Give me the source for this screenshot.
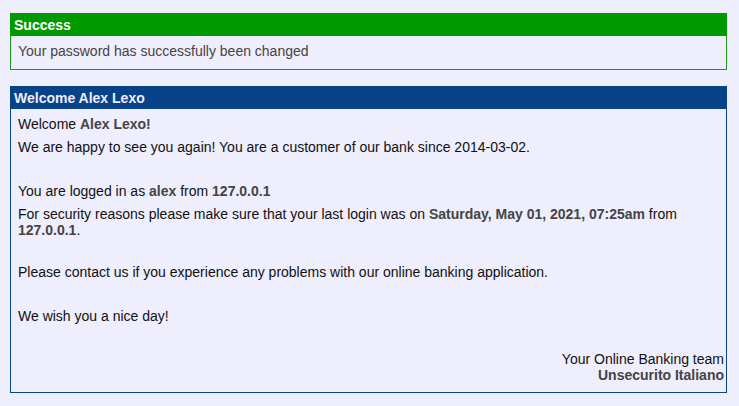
export default function App() {
  return (
    <div className="min-h-[406px] bg-[#eeeefd] pt-[13px] px-[10px] text-[14px] leading-[16px]" style={{ fontFamily: '"Liberation Sans", Arial, sans-serif' }}>
      {/* Success message */}
      <div className="w-[717px] border border-[#1a9a1a]">
        <div className="bg-[#009900] text-white font-bold px-[4px] pt-[4px] pb-[3px] -mx-px -mt-px">Success</div>
        <div className="pl-[7px] pt-[7px] pb-[10px] text-[#444]">Your password has successfully been changed</div>
      </div>

      {/* Welcome panel */}
      <div className="w-[717px] mt-[16px] border border-[#08438a]">
        <div className="bg-[#08438a] text-[#eeeefd] font-bold px-[4px] pt-[4px] pb-[3px] -mx-px -mt-px">Welcome Alex Lexo</div>
        <div className="pl-[7px] pr-[2px] pt-[7px] pb-[9px] text-[#111]">
          <p>Welcome <b className="text-[#444]">Alex Lexo!</b></p>
          <p className="mt-[7px]">We are happy to see you again! You are a customer of our bank since 2014-03-02.</p>
          <p className="mt-[28px]">You are logged in as <b className="text-[#444]">alex</b> from <b className="text-[#444]">127.0.0.1</b></p>
          <p className="mt-[7px] pr-[5px]">
            For security reasons please make sure that your last login was on{' '}
            <b className="text-[#444]">Saturday, May 01, 2021, 07:25am</b> from <b className="text-[#444]">127.0.0.1</b>.
          </p>
          <p className="mt-[26px]">Please contact us if you experience any problems with our online banking application.</p>
          <p className="mt-[28px]">We wish you a nice day!</p>
          <div className="mt-[27px] text-right">
            <p>Your Online Banking team</p>
            <p className="font-bold text-[#444]">Unsecurito Italiano</p>
          </div>
        </div>
      </div>
    </div>
  );
}
